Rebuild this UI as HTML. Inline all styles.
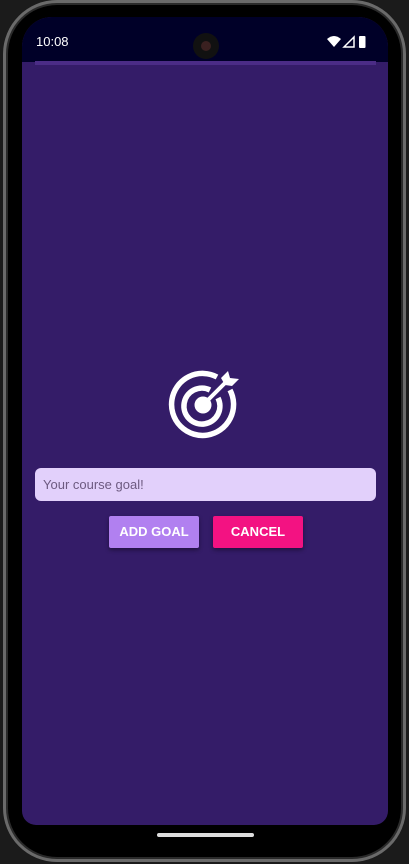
<!DOCTYPE html>
<html><head><style>
body{margin:0;width:409px;height:864px;background:#1b1b1b;position:relative;overflow:hidden;font-family:"Liberation Sans",Roboto,sans-serif}
.frame{position:absolute;left:3px;top:0;width:403px;height:862px;border-radius:54px;background:#000;box-shadow:inset 0 0 0 3px #6a6a6a,inset 0 0 0 5px #2a2a2a}
.screen{position:absolute;left:22px;top:17px;width:366px;height:808px;border-radius:30px 30px 14px 14px;background:#341c68;overflow:hidden}
.status{position:absolute;left:0;top:0;width:366px;height:45px;background:#000028}
.line{position:absolute;left:13px;top:44px;width:341px;height:4px;background:#4b2c86}
.time{position:absolute;left:14px;top:17px;color:#fff;font-size:13px}
.cam{position:absolute;left:171px;top:16px;width:26px;height:26px;border-radius:50%;background:#111;}
.cam:after{content:"";position:absolute;left:8px;top:8px;width:10px;height:10px;border-radius:50%;background:#3a2020}
.input{position:absolute;left:13px;top:451px;width:341px;height:33px;border-radius:6px;background:#e2d0fb;color:#6d5a80;font-size:13px;line-height:33px;padding-left:8px;box-sizing:border-box}
.btn{position:absolute;top:499px;height:32px;width:90px;color:#fff;font-size:13px;font-weight:bold;text-align:center;line-height:32px;box-shadow:0 2px 4px rgba(0,0,0,.4);border-radius:2px}
.home{position:absolute;left:157px;top:833px;width:97px;height:4px;border-radius:2px;background:#ddd}
</style></head><body>
<div class="frame"></div>
<div class="screen">
<div class="status"></div>
<div class="line"></div>
<div class="time">10:08</div>
<div class="cam"></div>
<svg style="position:absolute;left:304px;top:17px" width="42" height="16" viewBox="0 0 42 16">
<path d="M1 5 Q8 -1 15 5 L8 13 Z" fill="#fff"/>
<path d="M18 13 L28 3 L28 13 Z" fill="none" stroke="#fff" stroke-width="1.5"/>
<rect x="33" y="2" width="6.5" height="12" rx="1" fill="#fff"/>
</svg>
<svg style="position:absolute;left:140px;top:348px" width="84" height="84" viewBox="0 0 84 84">
<g fill="none" stroke="#fff" stroke-width="5.5">
<path d="M68 25 A31 31 0 1 1 55 12"/>
<path d="M56 33 A18 18 0 1 1 48 25"/>
</g>
<circle cx="41" cy="40" r="8.5" fill="#fff"/>
<path d="M41 40 L65 16" stroke="#fff" stroke-width="4"/>
<path d="M59 13 L66 6 L68 13 L77 14 L70 21 L63 20 Z" fill="#fff"/>
</svg>
<div class="input">Your course goal!</div>
<div class="btn" style="left:87px;background:#b180f0">ADD GOAL</div>
<div class="btn" style="left:191px;background:#f31282">CANCEL</div>
</div>
<div class="home"></div>
</body></html>
